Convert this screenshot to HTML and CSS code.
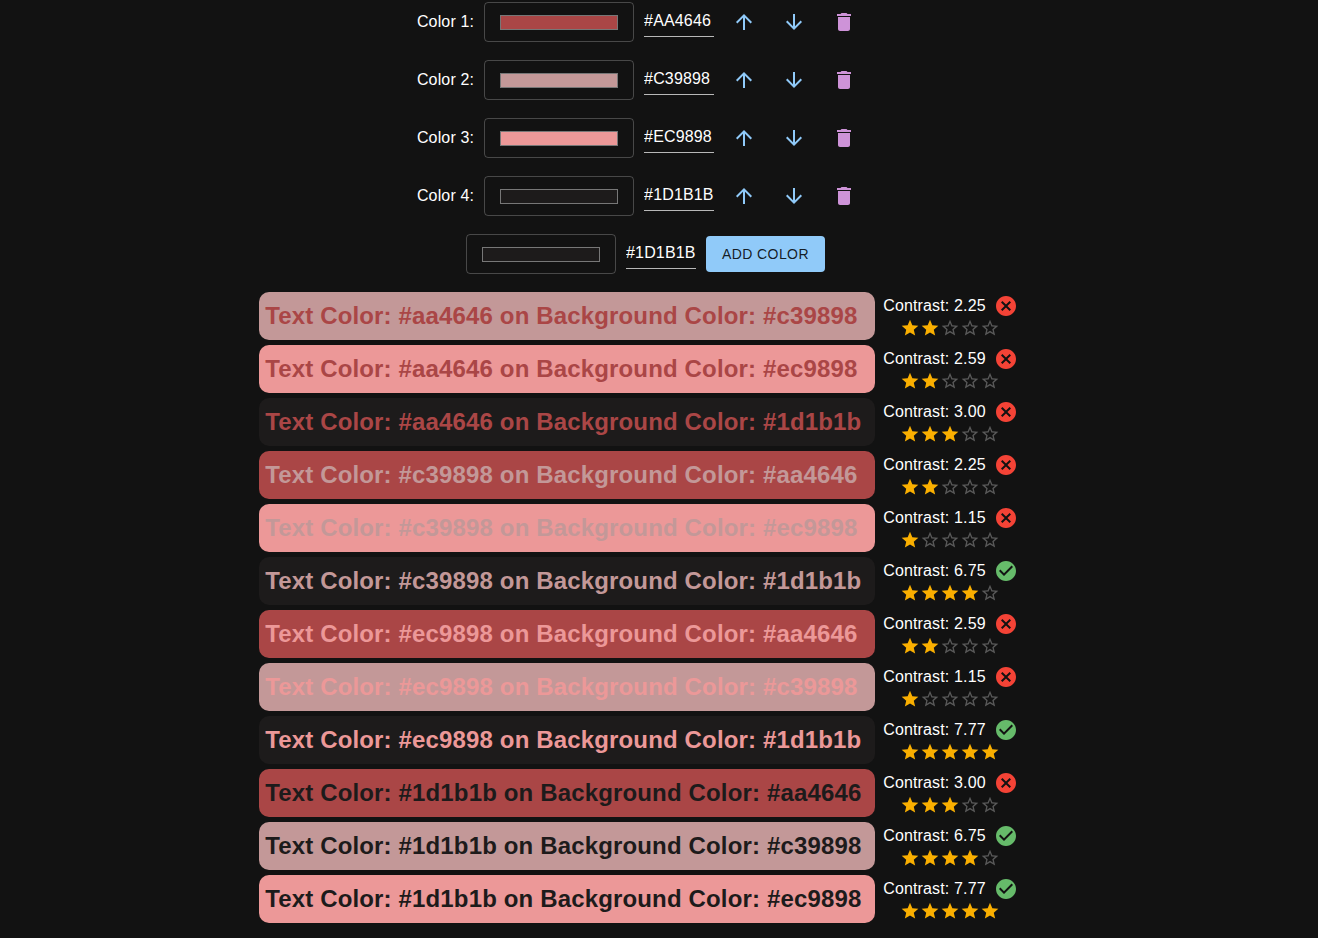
FILE: index.html
```html
<!DOCTYPE html>
<html lang="en">
<head>
<meta charset="utf-8">
<meta name="viewport" content="width=device-width, initial-scale=1">
<title>Color contrast checker</title>
<link rel="stylesheet" href="styles.css">
</head>
<body>
<svg class="sprite" aria-hidden="true">
  <symbol id="up" viewBox="0 0 24 24"><path d="m4 12 1.41 1.41L11 7.83V20h2V7.83l5.58 5.59L20 12l-8-8-8 8z"/></symbol>
  <symbol id="down" viewBox="0 0 24 24"><path d="m20 12-1.41-1.41L13 16.17V4h-2v12.17l-5.58-5.59L4 12l8 8 8-8z"/></symbol>
  <symbol id="trash" viewBox="0 0 24 24"><path d="M6 19c0 1.1.9 2 2 2h8c1.1 0 2-.9 2-2V7H6v12zM19 4h-3.5l-1-1h-5l-1 1H5v2h14V4z"/></symbol>
  <symbol id="fail" viewBox="0 0 24 24"><path d="M12 2C6.47 2 2 6.47 2 12s4.47 10 10 10 10-4.47 10-10S17.53 2 12 2zm5 13.59L15.59 17 12 13.41 8.41 17 7 15.59 10.59 12 7 8.41 8.41 7 12 10.59 15.59 7 17 8.41 13.41 12 17 15.59z"/></symbol>
  <symbol id="pass" viewBox="0 0 24 24"><path d="M12 2C6.48 2 2 6.48 2 12s4.48 10 10 10 10-4.48 10-10S17.52 2 12 2zm-2 15-5-5 1.41-1.41L10 14.17l7.59-7.59L19 8l-9 9z"/></symbol>
  <symbol id="star" viewBox="0 0 24 24"><path d="M12 17.27 18.18 21l-1.64-7.03L22 9.24l-7.19-.61L12 2 9.19 8.63 2 9.24l5.46 4.73L5.82 21z"/></symbol>
  <symbol id="star-empty" viewBox="0 0 24 24"><path d="m22 9.24-7.19-.62L12 2 9.19 8.63 2 9.24l5.46 4.73L5.82 21 12 17.27 18.18 21l-1.63-7.03L22 9.24zM12 15.4l-3.76 2.27 1-4.28-3.32-2.88 4.38-.38L12 6.1l1.71 4.04 4.38.38-3.32 2.88 1 4.28L12 15.4z"/></symbol>
</svg>
<main class="page">
  <section class="palette" id="palette">
    <form class="color-row add-row" id="add-form">
      <input class="swatch" type="color" value="#1d1b1b" aria-label="New color">
      <input class="hex" type="text" value="#1D1B1B" aria-label="New color hex">
      <button class="add-button" type="button">ADD COLOR</button>
    </form>
  </section>
  <section class="results" id="results"></section>
</main>
<script src="app.js"></script>
</body>
</html>
```

FILE: styles.css
```css
* { box-sizing: border-box; }

body {
  margin: 0;
  background: #121212;
  color: #fff;
  font-family: "Liberation Sans", Arial, sans-serif;
  font-size: 16px;
  line-height: 24px;
  letter-spacing: 0.00938em;
}

.sprite { display: none; }

.page {
  display: flex;
  flex-direction: column;
  align-items: center;
  gap: 18px;
  padding: 2px 37px 15px 0;
}

.palette {
  display: flex;
  flex-direction: column;
  align-items: center;
  gap: 18px;
}

.color-row {
  display: flex;
  align-items: center;
  gap: 10px;
}

.add-row { padding-left: 10px; }

.swatch {
  width: 150px;
  height: 40px;
  padding: 8px 13px 7px;
  border: 1px solid rgba(255, 255, 255, 0.23);
  border-radius: 4px;
  background: transparent;
}

.hex {
  width: 70px;
  height: 32px;
  margin: 0 0 2px;
  padding: 4px 0;
  border: 0;
  border-bottom: 1px solid rgba(255, 255, 255, 0.7);
  background: transparent;
  color: inherit;
  font: inherit;
  letter-spacing: inherit;
}

.icon-button {
  display: flex;
  padding: 8px;
  border: 0;
  border-radius: 50%;
  background: transparent;
  color: #90caf9;
}

.icon-button.delete { color: #ce93d8; }

.icon {
  width: 24px;
  height: 24px;
  fill: currentColor;
}

.add-button {
  height: 36px;
  padding: 0 16px;
  border: 0;
  border-radius: 4px;
  background: #90caf9;
  color: rgba(0, 0, 0, 0.87);
  font: 500 14px/24px "Liberation Sans", Arial, sans-serif;
  letter-spacing: 0.02857em;
}

.results {
  display: flex;
  flex-direction: column;
  gap: 5px;
}

.result {
  display: grid;
  grid-template-columns: 616px auto;
  align-items: center;
  gap: 8px;
  padding-right: 4px;
}

.sample {
  margin: 0;
  padding: 8px 6px;
  border-radius: 10px;
  font-size: 24px;
  line-height: 32px;
  font-weight: 700;
  white-space: nowrap;
}

.score {
  display: flex;
  flex-direction: column;
  align-items: center;
}

.contrast {
  display: flex;
  gap: 8px;
}

.contrast .fail { color: #f44336; }
.contrast .pass { color: #66bb6a; }

.stars {
  display: flex;
  color: #faaf00;
}

.stars .icon {
  width: 20px;
  height: 20px;
}

.stars .empty { color: rgba(255, 255, 255, 0.3); }
```

FILE: app.js
```js
const colors = ["#aa4646", "#c39898", "#ec9898", "#1d1b1b"];

// Contrast ratio and star count for each unordered pair of palette entries.
const scores = {
  "0-1": ["2.25", 2], "0-2": ["2.59", 2], "0-3": ["3.00", 3],
  "1-2": ["1.15", 1], "1-3": ["6.75", 4], "2-3": ["7.77", 5]
};

const icon = (name, cls = "") =>
  `<svg class="icon ${cls}" aria-hidden="true"><use href="#${name}"/></svg>`;

const rows = colors.map((c, i) => `
  <div class="color-row">
    <label for="color-${i}">Color ${i + 1}:</label>
    <input class="swatch" id="color-${i}" type="color" value="${c}">
    <input class="hex" type="text" value="${c.toUpperCase()}" aria-label="Color ${i + 1} hex">
    <button class="icon-button" type="button" aria-label="Move up">${icon("up")}</button>
    <button class="icon-button" type="button" aria-label="Move down">${icon("down")}</button>
    <button class="icon-button delete" type="button" aria-label="Delete">${icon("trash")}</button>
  </div>`).join("");
document.getElementById("add-form").insertAdjacentHTML("beforebegin", rows);

let html = "";
colors.forEach((text, i) => colors.forEach((bg, j) => {
  if (i === j) return;
  const [ratio, stars] = scores[`${Math.min(i, j)}-${Math.max(i, j)}`];
  const state = Number(ratio) >= 4.5 ? "pass" : "fail";
  html += `
  <article class="result">
    <h2 class="sample" style="color:${text};background:${bg}">Text Color: ${text} on Background Color: ${bg}</h2>
    <div class="score">
      <div class="contrast"><span>Contrast: ${ratio}</span>${icon(state, state)}</div>
      <div class="stars" role="img" aria-label="${stars} of 5 stars">${
        icon("star").repeat(stars)}${icon("star-empty", "empty").repeat(5 - stars)}</div>
    </div>
  </article>`;
}));
document.getElementById("results").innerHTML = html;
```
